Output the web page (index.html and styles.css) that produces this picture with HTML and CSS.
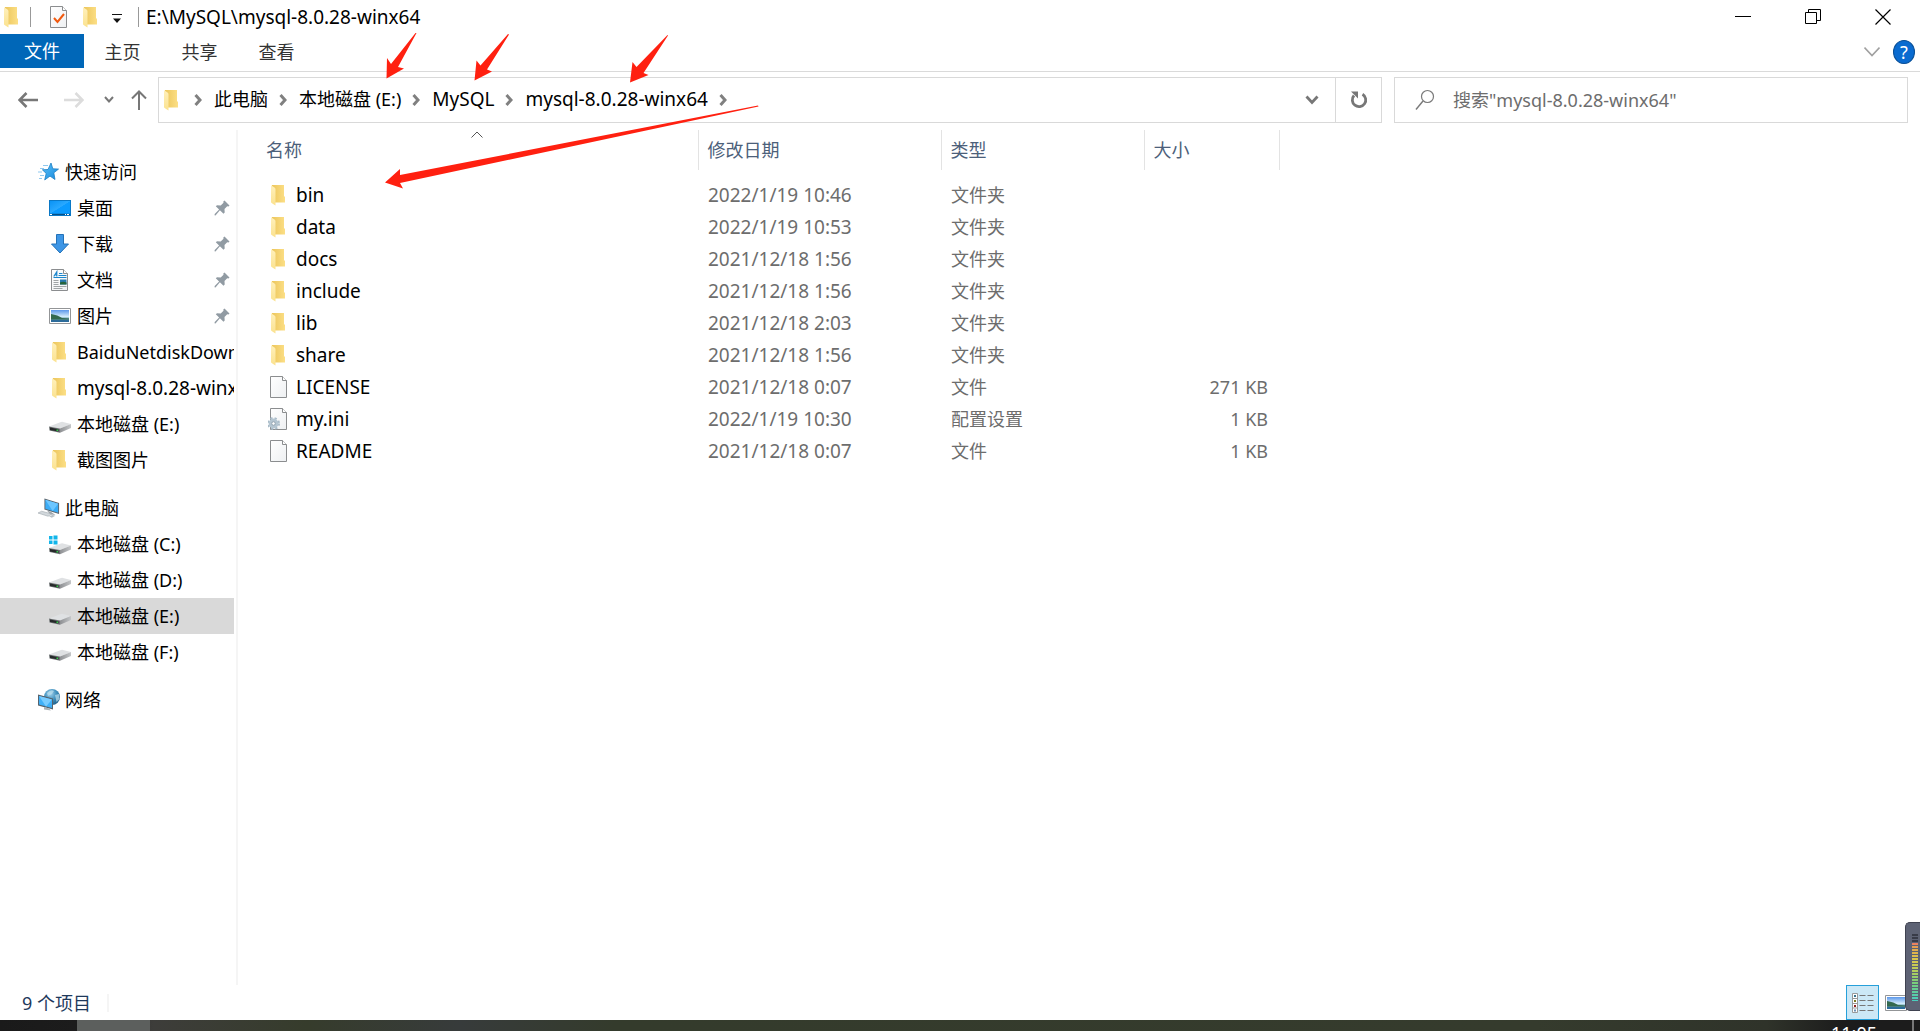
FILE: index.html
```html
<!DOCTYPE html>
<html lang="zh-CN">
<head>
<meta charset="utf-8">
<title>E:\MySQL\mysql-8.0.28-winx64</title>
<link rel="stylesheet" href="styles.css">
</head>
<body>
<svg class="defs" width="0" height="0" aria-hidden="true">
  <defs>
    <linearGradient id="gFold" x1="0" x2="1" y1="0" y2="0"><stop offset="0" stop-color="#ecc65c"/><stop offset="1" stop-color="#fcdf86"/></linearGradient>
    <linearGradient id="gFlap" x1="0" x2="0" y1="0" y2="1"><stop offset="0" stop-color="#fff0bb"/><stop offset="1" stop-color="#fbe28f"/></linearGradient>
    <linearGradient id="gBlue" x1="0" x2="1" y1="0" y2="1"><stop offset="0" stop-color="#0a93f5"/><stop offset="0.5" stop-color="#2aa9ff"/><stop offset="0.52" stop-color="#0c9bff"/><stop offset="1" stop-color="#0c9bff"/></linearGradient>
    <linearGradient id="gStar" x1="0" x2="1" y1="0" y2="1"><stop offset="0" stop-color="#5cc3fa"/><stop offset="1" stop-color="#1587dc"/></linearGradient>
    <linearGradient id="gDisk" x1="0" x2="1" y1="0" y2="0"><stop offset="0" stop-color="#8e9093"/><stop offset="1" stop-color="#c4c6c8"/></linearGradient>
    <linearGradient id="gSky" x1="0" x2="0" y1="0" y2="1"><stop offset="0" stop-color="#5b97ea"/><stop offset="0.55" stop-color="#d4ecfb"/><stop offset="0.7" stop-color="#6fa5b5"/><stop offset="1" stop-color="#2f6c9a"/></linearGradient>
    <linearGradient id="gPage" x1="0" x2="1" y1="0" y2="1"><stop offset="0" stop-color="#ffffff"/><stop offset="1" stop-color="#eef0f2"/></linearGradient>
    <radialGradient id="gGlobe" cx="0.4" cy="0.3" r="0.8"><stop offset="0" stop-color="#9fd0ea"/><stop offset="0.5" stop-color="#3f8fbd"/><stop offset="1" stop-color="#1c5880"/></radialGradient>
  </defs>
  <symbol id="folder" viewBox="0 0 22 22"><path d="M4 1h12v11l1 1v5.500H4z" fill="url(#gFold)"/><path d="M3 1.200L6.500 3.500q1 .7 1 2V21.500L3.600 19Q3 18.600 3 18z" fill="url(#gFlap)"/></symbol>
  <symbol id="page" viewBox="0 0 22 22"><path d="M2.500.500h12l4 4v17h-16z" fill="url(#gPage)" stroke="#8b8d8f"/><path d="M14.500.500v4h4" fill="#fff" stroke="#8b8d8f"/></symbol>
  <symbol id="ini" viewBox="0 0 22 22"><use href="#page"/><circle cx="5.500" cy="15.500" r="5.500" fill="none" stroke="#a9bbc8" stroke-width="2" stroke-dasharray="2.200 2.200"/><circle cx="5.500" cy="15.500" r="3.400" fill="#fff" stroke="#b4c5d1" stroke-width="3"/><circle cx="5.500" cy="15.500" r="1.800" fill="#fff" stroke="#8a9dab"/></symbol>
  <symbol id="drive" viewBox="0 0 22 22"><path d="M0 13.500L12 9q1-.3 2-.1l8 2.100-11 4.500z" fill="#dfe1e3"/><path d="M22 11v4L11 19.700v-4.200z" fill="url(#gDisk)"/><path d="M0 13.500l11 2v4.200L.5 17.500z" fill="#6d7173"/><path d="M1 14.600l8.500 1.700v2.200L1 16.900z" fill="#26292a"/><path d="M7.500 16.500h1.500v1.500H7.500z" fill="#35d04a"/></symbol>
  <symbol id="windrive" viewBox="0 0 22 22"><g transform="translate(0 1.500)"><use href="#drive"/></g><path d="M0 3h3.500v3.500H0zM4.500 2.500h4v4h-4zM0 7.500h3.500V11H0zM4.500 7.500h4v4h-4z" fill="#12b5ea"/></symbol>
  <symbol id="star" viewBox="0 0 22 22"><path d="M5 4.500h5M2 7.500h4M0 11h4M2 14.500h4M1 17.500h3" stroke="#8fc9f0" stroke-width="1"/><path d="M13 2l1.800 5.800 5.700.3-4.700 3.700 1.200 6.700-5-3.400-5.300 3.800 1.500-6.500-3.800-3.600 5.600-.3z" fill="url(#gStar)" stroke="#1a7dc4" stroke-width=".8"/></symbol>
  <symbol id="desktop" viewBox="0 0 22 22"><path d="M0 3h22v16H0z" fill="#0a78c6"/><path d="M1 4h20v12.500H1z" fill="url(#gBlue)"/><path d="M1 17h20v1H1z" fill="#064f86"/><path d="M1 17h2v1H1zM16 17h1v1h-1zM18 17h2v1h-2z" fill="#fff"/></symbol>
  <symbol id="down" viewBox="0 0 22 22"><path d="M7.500 1.500h7V11h5L11 20 2.500 11h5z" fill="#3d96e6" stroke="#2472b8"/></symbol>
  <symbol id="doc" viewBox="0 0 22 22"><use href="#page"/><path d="M10 4.500h3.500M9.500 6.500h8M4.500 8.500h13" stroke="#1b86cc"/><path d="M4.800 7.500L7.800 2.800v4.700M6 6h2" fill="none" stroke="#1b86cc" stroke-width="1.200"/><path d="M4.500 11.500h5M4.500 13.500h5M4.500 15.500h5M4.500 17.500h13M4.500 19.500h9" stroke="#a0a4a6"/><path d="M11 10.500h6.500v5H11z" fill="#2778ae"/><path d="M11 13.500q3-1.500 6.500 0v2H11z" fill="#25633b"/></symbol>
  <symbol id="picture" viewBox="0 0 22 16"><path d="M.5.500h21v15H.5z" fill="#fff" stroke="#939597"/><path d="M2 2h18v12H2z" fill="url(#gSky)"/><path d="M2 6q7 1 11 4l7 .5v1H2z" fill="#33694f"/><path d="M2 12h18v2H2z" fill="#2c6b9a"/></symbol>
  <symbol id="pc" viewBox="0 0 24 22"><path d="M7 .5l16 5v12l-16-5z" fill="#5b646c"/><path d="M8 2l14 4.300v9.800L8 11.800z" fill="#3bacf6"/><path d="M8 2l14 4.300-6 8z" fill="#6cc6ff"/><path d="M10 14l4 1.200 5 3.500-6-1z" fill="#9ba2a8"/><path d="M0 16.500l4-2 11 3-4 2.500z" fill="#d2d8dc" stroke="#9aa3a9" stroke-width=".6"/><path d="M12 20l4-1.500 3 1-4 2z" fill="#b9c0c5"/></symbol>
  <symbol id="network" viewBox="0 0 22 22"><circle cx="14" cy="8" r="8" fill="url(#gGlobe)"/><path d="M9 4q4-4 7-2l-2 3-4 2zM17 6l4-1 .5 5-3 3z" fill="#bde0ee" opacity=".7"/><path d="M0 5.500l15 4v11l-15-4z" fill="#56636d"/><path d="M1 7l13 3.500v8.500L1 15.500z" fill="#3fb0f8"/><path d="M1 7l13 3.500-6 7z" fill="#79ccff"/><path d="M6 18l5 1.500 2 2-7-1z" fill="#a9b1b6"/></symbol>
  <symbol id="pin" viewBox="0 0 16 16"><path d="M10.500.5l5 5-1 1-1.300-.3-2.700 2.900.2 3.400-1.200 1.200-3.600-3.500L1.500 15.500l-1-.2.200-1.200 4.400-4.600L1.800 6.300 3 5.200l3.700.2 2.800-2.700-.2-1.200z" fill="#919ba3"/></symbol>
  <symbol id="chev" viewBox="0 0 8 12"><path d="M1.500 1l4.500 5-4.500 5" fill="none" stroke="#808080" stroke-width="3"/></symbol>
</svg>

<div class="window">
  <header class="titlebar">
    <svg class="ico"><use href="#folder"/></svg>
    <span class="bar"></span>
    <button class="plain props" aria-label="属性"><svg class="ico"><use href="#page"/><path d="M6 12l3.500 4L16 8" fill="none" stroke="#f0590f" stroke-width="2"/></svg></button>
    <button class="plain" aria-label="新建文件夹"><svg class="ico"><use href="#folder"/></svg></button>
    <button class="plain more" aria-label="自定义快速访问工具栏"><svg width="10" height="12" viewBox="0 0 10 12"><path d="M0 3.500h10" stroke="#111"/><path d="M1 7.500h8L5 12z" fill="#111"/></svg></button>
    <span class="bar"></span>
    <h1 class="title">E:\MySQL\mysql-8.0.28-winx64</h1>
    <button class="caption" aria-label="最小化"><svg width="16" height="16" viewBox="0 0 16 16"><path d="M0 7.500h16" stroke="#000"/></svg></button>
    <button class="caption" aria-label="还原"><svg width="16" height="16" viewBox="0 0 16 16"><path d="M.5 3.500h11v11H.5zM3.500 3.500v-3h12v11h-4" fill="none" stroke="#000"/></svg></button>
    <button class="caption" aria-label="关闭"><svg width="16" height="16" viewBox="0 0 16 16"><path d="M.5.500l15 15M15.500.500l-15 15" stroke="#000" stroke-width="1.200"/></svg></button>
  </header>

  <nav class="ribbon">
    <button class="tab tab-file">文件</button>
    <button class="tab">主页</button>
    <button class="tab">共享</button>
    <button class="tab">查看</button>
    <button class="plain expand" aria-label="展开功能区"><svg width="16" height="12" viewBox="0 0 16 12"><path d="M.5 1.500L8 9.500l7.500-8" fill="none" stroke="#a0a0a0" stroke-width="1.600"/></svg></button>
    <button class="help" aria-label="帮助">?</button>
  </nav>

  <div class="addressrow">
    <div class="nav">
      <button class="plain" aria-label="后退"><svg width="20" height="16" viewBox="0 0 20 16"><path d="M1.500 8H20M8.500 1l-7 7 7 7" fill="none" stroke="#777" stroke-width="2.600"/></svg></button>
      <button class="plain fwd" aria-label="前进"><svg width="20" height="16" viewBox="0 0 20 16"><path d="M0 8h18.500M11.500 1l7 7-7 7" fill="none" stroke="#dcdcdc" stroke-width="2.600"/></svg></button>
      <button class="plain" aria-label="最近浏览的位置"><svg width="10" height="8" viewBox="0 0 10 8"><path d="M1 1l4 4.500L9 1" fill="none" stroke="#777" stroke-width="2"/></svg></button>
      <button class="plain up" aria-label="上移"><svg width="16" height="20" viewBox="0 0 16 20"><path d="M8 20V1.500M1 8.500l7-7 7 7" fill="none" stroke="#777" stroke-width="2"/></svg></button>
    </div>
    <div class="address">
      <svg class="ico"><use href="#folder"/></svg>
      <svg class="chev"><use href="#chev"/></svg>
      <a href="#">此电脑</a><svg class="chev"><use href="#chev"/></svg>
      <a href="#">本地磁盘 (E:)</a><svg class="chev"><use href="#chev"/></svg>
      <a class="latin" href="#">MySQL</a><svg class="chev"><use href="#chev"/></svg>
      <a class="latin" href="#">mysql-8.0.28-winx64</a><svg class="chev"><use href="#chev"/></svg>
      <button class="plain drop" aria-label="以前的位置"><svg width="14" height="10" viewBox="0 0 14 10"><path d="M1.500 1.500L7 7.500l5.500-6" fill="none" stroke="#777" stroke-width="2.800"/></svg></button>
      <button class="refresh" aria-label="刷新"><svg width="18" height="20" viewBox="0 0 18 20"><path d="M12.500 4.200A6.700 6.700 0 1 1 4 5.500" fill="none" stroke="#777" stroke-width="2.800"/><path d="M1 1.500h7v7z" fill="#777"/></svg></button>
    </div>
    <label class="search">
      <svg width="20" height="22" viewBox="0 0 20 22"><circle cx="12.500" cy="7.500" r="6" fill="none" stroke="#7a7a7a" stroke-width="1.200"/><path d="M8 12L1 20.500" stroke="#7a7a7a" stroke-width="1.400"/></svg>
      <input type="text" aria-label="搜索" placeholder='搜索"mysql-8.0.28-winx64"'>
    </label>
  </div>

  <div class="body">
    <aside class="tree">
      <ul>
        <li><a class="root" href="#"><svg class="ico"><use href="#star"/></svg>快速访问</a></li>
        <li><a href="#"><svg class="ico"><use href="#desktop"/></svg>桌面<svg class="pin"><use href="#pin"/></svg></a></li>
        <li><a href="#"><svg class="ico"><use href="#down"/></svg>下载<svg class="pin"><use href="#pin"/></svg></a></li>
        <li><a href="#"><svg class="ico"><use href="#doc"/></svg>文档<svg class="pin"><use href="#pin"/></svg></a></li>
        <li><a href="#"><svg class="ico"><use href="#picture"/></svg>图片<svg class="pin"><use href="#pin"/></svg></a></li>
        <li><a href="#"><svg class="ico"><use href="#folder"/></svg>BaiduNetdiskDownload</a></li>
        <li><a class="latin" href="#"><svg class="ico"><use href="#folder"/></svg>mysql-8.0.28-winx64</a></li>
        <li><a href="#"><svg class="ico"><use href="#drive"/></svg>本地磁盘 (E:)</a></li>
        <li><a href="#"><svg class="ico"><use href="#folder"/></svg>截图图片</a></li>
      </ul>
      <ul>
        <li><a class="root" href="#"><svg class="ico"><use href="#pc"/></svg>此电脑</a></li>
        <li><a href="#"><svg class="ico"><use href="#windrive"/></svg>本地磁盘 (C:)</a></li>
        <li><a href="#"><svg class="ico"><use href="#drive"/></svg>本地磁盘 (D:)</a></li>
        <li><a class="selected" href="#"><svg class="ico"><use href="#drive"/></svg>本地磁盘 (E:)</a></li>
        <li><a href="#"><svg class="ico"><use href="#drive"/></svg>本地磁盘 (F:)</a></li>
      </ul>
      <ul>
        <li><a class="root" href="#"><svg class="ico"><use href="#network"/></svg>网络</a></li>
      </ul>
    </aside>
    <main class="files">
      <table>
        <colgroup><col class="c-name"><col class="c-date"><col class="c-type"><col class="c-size"></colgroup>
        <thead>
          <tr><th>名称<svg class="sort" width="12" height="7" viewBox="0 0 12 7"><path d="M.5 6.500L6 1l5.500 5.500" fill="none" stroke="#555"/></svg></th><th>修改日期</th><th>类型</th><th>大小</th></tr>
        </thead>
        <tbody>
          <tr><td><span class="name"><svg class="ico"><use href="#folder"/></svg>bin</span></td><td class="latin">2022/1/19 10:46</td><td>文件夹</td><td></td></tr>
          <tr><td><span class="name"><svg class="ico"><use href="#folder"/></svg>data</span></td><td class="latin">2022/1/19 10:53</td><td>文件夹</td><td></td></tr>
          <tr><td><span class="name"><svg class="ico"><use href="#folder"/></svg>docs</span></td><td class="latin">2021/12/18 1:56</td><td>文件夹</td><td></td></tr>
          <tr><td><span class="name"><svg class="ico"><use href="#folder"/></svg>include</span></td><td class="latin">2021/12/18 1:56</td><td>文件夹</td><td></td></tr>
          <tr><td><span class="name"><svg class="ico"><use href="#folder"/></svg>lib</span></td><td class="latin">2021/12/18 2:03</td><td>文件夹</td><td></td></tr>
          <tr><td><span class="name"><svg class="ico"><use href="#folder"/></svg>share</span></td><td class="latin">2021/12/18 1:56</td><td>文件夹</td><td></td></tr>
          <tr><td><span class="name"><svg class="ico"><use href="#page"/></svg>LICENSE</span></td><td class="latin">2021/12/18 0:07</td><td>文件</td><td>271 KB</td></tr>
          <tr><td><span class="name"><svg class="ico"><use href="#ini"/></svg>my.ini</span></td><td class="latin">2022/1/19 10:30</td><td>配置设置</td><td>1 KB</td></tr>
          <tr><td><span class="name"><svg class="ico"><use href="#page"/></svg>README</span></td><td class="latin">2021/12/18 0:07</td><td>文件</td><td>1 KB</td></tr>
        </tbody>
      </table>
    </main>
  </div>

  <footer class="status">
    <span class="count">9 个项目</span>
    <button class="view active" aria-label="详细信息"><svg width="22" height="22" viewBox="0 0 22 22"><path d="M.5 1.500h5v19h-5zM.5 6.500h5M.5 11.500h5M.5 16h5" fill="#fff" stroke="#999"/><path d="M2 3h2v2H2z" fill="#37718c"/><path d="M2 8h2v2H2z" fill="#7d7a23"/><path d="M2 13h2v2H2z" fill="#8d2020"/><path d="M2 17.500h2v2H2z" fill="#6c91b4"/><path d="M7.500 3.500h6M15.500 3.500h6M7.500 8.500h6M15.500 8.500h6M7.500 13.500h6M15.500 13.500h6M7.500 18.500h6M15.500 18.500h6" stroke="#777"/></svg></button>
    <button class="view thumbs" aria-label="大缩略图"><svg width="22" height="16"><use href="#picture"/></svg></button>
  </footer>
</div>

<div class="taskbar"><span class="task"></span><span class="clock">11:05</span><span class="show-desktop"></span></div>

<div class="meter"><div class="bars"></div></div>

<svg class="marks" width="400" height="160" viewBox="380 30 400 160" aria-hidden="true">
  <g fill="#ff2010">
    <path d="M416.500 33L398 67l6 1.500-17.500 10 .5-20.500 4 6 24.500-31z"/>
    <path d="M509 34.500l-22 35 5 2-17.500 9 2-20 4 5L508 34z"/>
    <path d="M668 35.500l-24.500 37.500 5 2-18.500 7.500 2.500-20.500 4 5 31-32z"/>
    <path d="M758.500 106.500L400 183l3 5.500-18-6 15-13.500v6L758 105.500z"/>
  </g>
</svg>
</body>
</html>
```
FILE: styles.css
```css
* { box-sizing: border-box; }

body {
  margin: 0;
  min-height: 100vh;
  display: flex;
  flex-direction: column;
  background: #fff;
  color: #000;
  font: 18px/24px "Noto Sans", "Noto Sans CJK SC", sans-serif;
  overflow: hidden;
}

button, input { font: inherit; color: inherit; }
a { color: inherit; text-decoration: none; }
svg { display: block; flex: none; }
.defs { position: absolute; }
.ico { width: 22px; height: 22px; }
.latin, .title, .name { font-size: 19px; }

.plain, .caption, .tab, .help, .refresh, .view {
  border: 0;
  padding: 0;
  background: none;
  display: flex;
  align-items: center;
  justify-content: center;
}

.window { flex: 1; display: flex; flex-direction: column; }

/* title bar */
.titlebar { height: 34px; display: flex; align-items: center; padding: 0 2px 0 1px; }
.bar { width: 1px; height: 20px; background: #999; margin-left: 7px; }
.props { margin: 0 10px 0 17px; }
.more { margin-left: 10px; }
.more + .bar { margin-left: 16px; }
.title { flex: 1; margin: 0 0 0 7px; font-weight: 400; }
.caption { width: 70px; height: 34px; }

/* ribbon tabs */
.ribbon { height: 38px; display: flex; border-bottom: 1px solid #dadada; }
.tab { width: 77px; height: 36px; color: #333; }
.tab-file { width: 84px; height: 34px; background: #0067b8; color: #fff; }
.expand { margin-left: auto; width: 20px; height: 36px; }
.help {
  width: 22px;
  height: 24px;
  margin: 6px 5px 0 11px;
  border: 1px solid #0a4f96;
  border-radius: 50%;
  background: #0a6bd0;
  color: #fff;
}

/* address row */
.addressrow { display: flex; padding: 5px 12px 0 18px; height: 58px; }
.nav { width: 140px; height: 46px; display: flex; align-items: center; }
.fwd { margin: 0 20px 0 26px; }
.up { margin-left: 17px; }
.address {
  flex: 1224 1 1224px;
  height: 46px;
  display: flex;
  align-items: center;
  border: 1px solid #d9d9d9;
  padding-left: 2px;
  white-space: nowrap;
}
.address a { padding-bottom: 2px; }
.chev { width: 8px; height: 12px; margin: 0 12px 0 11px; }
.drop { margin: 0 16px 0 auto; }
.refresh { width: 46px; height: 44px; border-left: 1px solid #d9d9d9; }
.search {
  flex: 514 1 514px;
  height: 46px;
  margin-left: 12px;
  display: flex;
  align-items: center;
  gap: 18px;
  border: 1px solid #d9d9d9;
  padding: 0 20px;
}
.search input { flex: 1; border: 0; padding: 0; outline: 0; background: none; }
.search input::placeholder { color: #6d6d6d; opacity: 1; }

/* navigation pane */
.body { flex: 1; display: flex; }
.tree { width: 238px; padding: 24px 2px 0 0; border-right: 2px solid #f5f5f5; }
.tree ul { list-style: none; margin: 0 0 12px; padding: 0; }
.tree a {
  height: 36px;
  display: flex;
  align-items: center;
  gap: 6px;
  padding-left: 49px;
  overflow: hidden;
  white-space: nowrap;
}
.tree .root { padding-left: 38px; gap: 5px; }
.tree .selected { background: #d9d9d9; }
.pin { width: 16px; height: 16px; margin: 0 4px 0 auto; }

/* file list */
.files { flex: 1; padding-left: 19px; }
table { table-layout: fixed; width: 1022px; border-collapse: collapse; }
.c-name { width: 441px; }
.c-date { width: 243px; }
.c-type { width: 203px; }
.c-size { width: 135px; }
th {
  position: relative;
  height: 40px;
  padding: 0 9px;
  border-right: 1px solid #e3e3e3;
  text-align: left;
  font-weight: 400;
  color: #4c607a;
}
.sort { position: absolute; top: 1px; left: 50%; margin-left: -6px; }
tbody::before { content: ""; display: block; height: 9px; }
td { height: 32px; padding: 0 10px; color: #6d6d6d; white-space: nowrap; }
td:first-child { padding-left: 11px; color: #000; }
td:last-child { padding-right: 11px; text-align: right; }
.name { display: flex; align-items: center; gap: 6px; }

/* status bar */
.status { height: 35px; display: flex; align-items: center; color: #1e395b; }
.count { margin-right: auto; padding: 0 16px 0 22px; line-height: 18px; border-right: 2px solid #f5f5f5; }
.view { width: 33px; height: 35px; }
.view.active { background: #cce8f6; border: 1px solid #26a0da; }
.view.thumbs { width: 41px; justify-content: flex-start; padding-left: 6px; }

/* desktop task bar */
.taskbar {
  height: 11px;
  display: flex;
  overflow: hidden;
  background: linear-gradient(90deg, #1a1a1a 0, #1c1c1c 4%, #3d3d3a 8%, #363c2c 16%, #373b3b 24%, #343b2c 32%, #353b2d 80%, #2f332a 92%, #1c1c1c 96%);
}
.task { width: 73px; margin: 0 auto 0 77px; background: #5c5f5d; }
.clock { color: #fff; margin: 7px 35px 0 0; line-height: 12px; }
.show-desktop { width: 2px; margin-right: 6px; background: #777; }

/* floating level meter docked to the screen edge */
.meter {
  position: absolute;
  right: 0;
  bottom: 20px;
  width: 15px;
  height: 89px;
  padding: 10px 2px 10px 6px;
  border: 1px solid #3f4250;
  border-right: 0;
  border-radius: 5px 0 0 5px;
  background: #5d6274;
}
.bars {
  height: 68px;
  background:
    repeating-linear-gradient(#5d6274 0, #5d6274 1px, transparent 1px, transparent 3px),
    linear-gradient(#383b48 0, #383b48 13%, #ee7564 14%, #e2a64e 22%, #dcc74c 38%, #b7cf5a 55%, #74cf7e 75%, #48cfc0 100%);
}

/* red pen strokes over the window */
.marks { position: absolute; left: 380px; top: 30px; pointer-events: none; }
```
